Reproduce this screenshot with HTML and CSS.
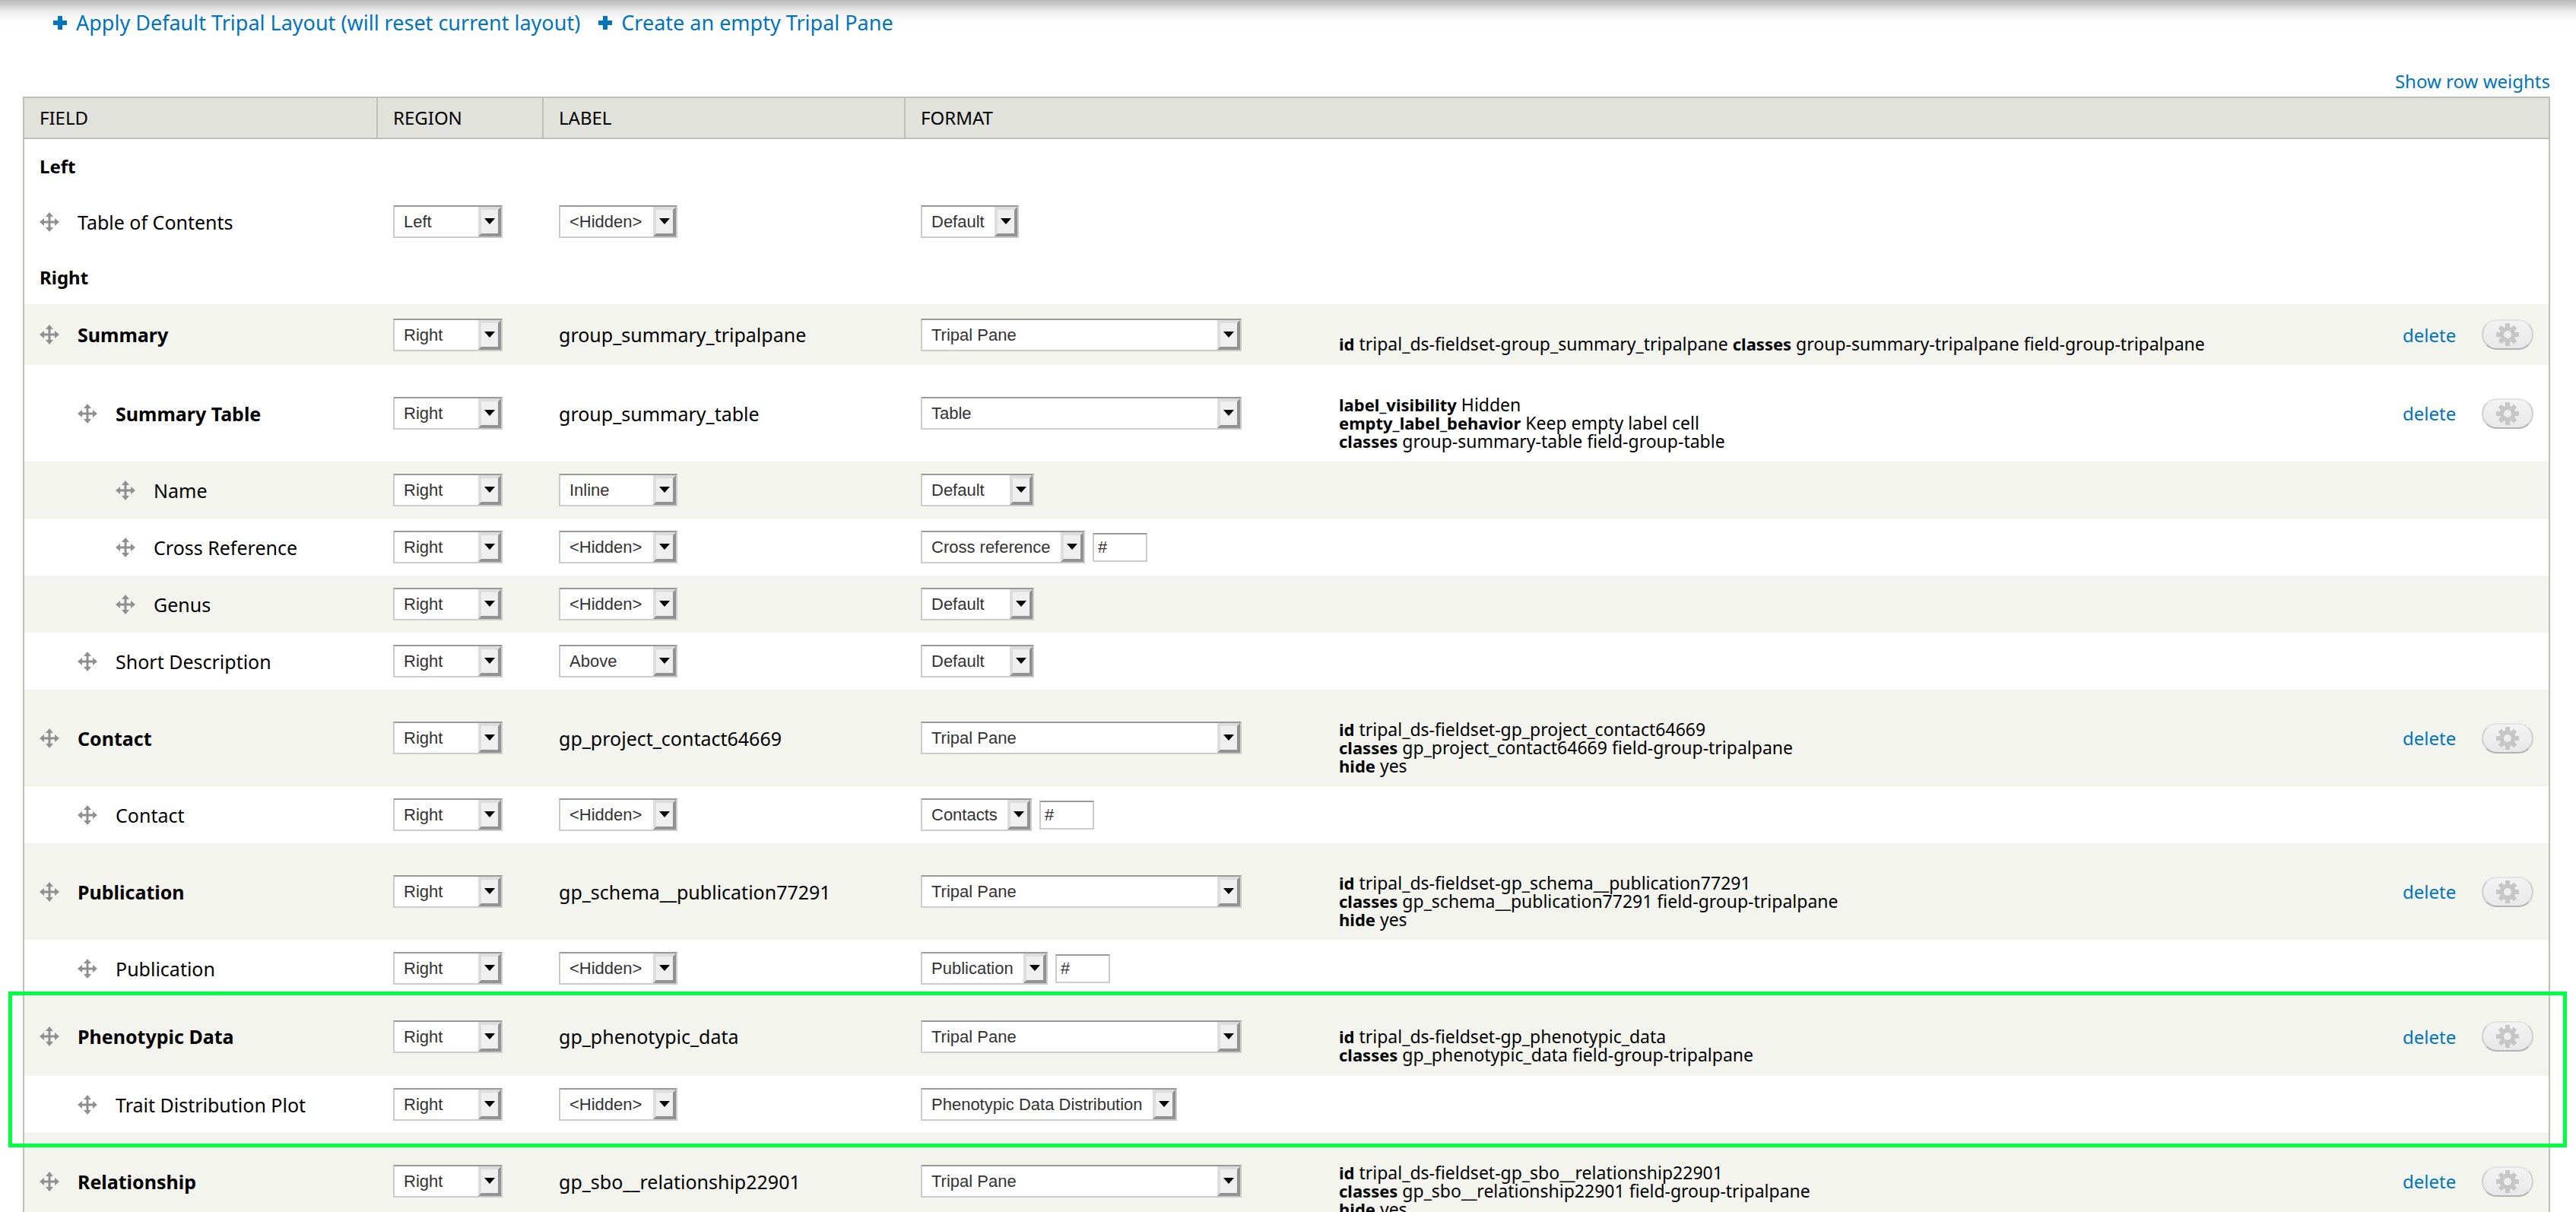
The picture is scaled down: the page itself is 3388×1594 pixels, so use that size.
FILE: index.html
```html
<!DOCTYPE html>
<html lang="en">
<head>
<meta charset="utf-8">
<title>Manage display</title>
<link rel="stylesheet" href="styles.css">
</head>
<body>
<svg class="sprite" aria-hidden="true">
  <symbol id="plus" viewBox="0 0 18 18"><path d="M6 0h6v6h6v6h-6v6H6v-6H0V6h6z"/></symbol>
  <symbol id="move" viewBox="0 0 26 26"><path d="M13 0l5 6h-3.500v5.500H20V8l6 5-6 5v-3.500h-5.500V20H18l-5 6-5-6h3.500v-5.500H6V18l-6-5 6-5v3.500h5.500V6H8z"/></symbol>
  <symbol id="gear" viewBox="-15 -15 30 30">
    <g id="teeth"><path d="M-3-15h6v30h-6zM-15-3h30v6h-30z"/><path transform="rotate(45)" d="M-3-14.500h6v29h-6zM-14.500-3h29v6h-29z"/><circle r="10.500"/></g>
    <circle class="gear-hole" r="5"/>
  </symbol>
</svg>
<main class="page">
  <nav class="actions" aria-label="Layout actions">
    <a href="#apply"><svg class="plus"><use href="#plus"/></svg>Apply Default Tripal Layout (will reset current layout)</a>
    <a href="#create"><svg class="plus"><use href="#plus"/></svg>Create an empty Tripal Pane</a>
  </nav>
  <div class="weights"><a href="#weights">Show row weights</a></div>
  <table class="fields">
    <colgroup><col class="c-field"><col class="c-region"><col class="c-label"><col class="c-format"><col><col class="c-delete"><col class="c-gear"></colgroup>
    <thead>
      <tr><th scope="col">FIELD</th><th scope="col">REGION</th><th scope="col">LABEL</th><th scope="col" colspan="4">FORMAT</th></tr>
    </thead>
    <tbody>
      <tr class="section"><td colspan="7">Left</td></tr>
      <tr>
        <td><div class="name"><svg class="move"><use href="#move"/></svg>Table of Contents</div></td>
        <td><select class="w-region" aria-label="Region for Table of Contents"><option>Left</option><option>Right</option></select></td>
        <td><select class="w-label" aria-label="Label for Table of Contents"><option>&lt;Hidden&gt;</option></select></td>
        <td colspan="4"><select aria-label="Format for Table of Contents"><option>Default</option></select></td>
      </tr>
      <tr class="section"><td colspan="7">Right</td></tr>
      <tr class="odd lines-1">
        <td><div class="name group"><svg class="move"><use href="#move"/></svg>Summary</div></td>
        <td><select class="w-region" aria-label="Region for Summary"><option>Right</option><option>Left</option></select></td>
        <td>group_summary_tripalpane</td>
        <td><select class="w-pane" aria-label="Format for Summary"><option>Tripal Pane</option></select></td>
        <td class="settings"><b>id</b> tripal_ds-fieldset-group_summary_tripalpane <b>classes</b> group-summary-tripalpane field-group-tripalpane</td>
        <td><a href="#delete">delete</a></td>
        <td><button class="gear" type="button" aria-label="Edit Summary"><svg><use href="#gear"/></svg></button></td>
      </tr>
      <tr class="lines-3">
        <td><div class="name group depth-1"><svg class="move"><use href="#move"/></svg>Summary Table</div></td>
        <td><select class="w-region" aria-label="Region for Summary Table"><option>Right</option><option>Left</option></select></td>
        <td>group_summary_table</td>
        <td><select class="w-pane" aria-label="Format for Summary Table"><option>Table</option></select></td>
        <td class="settings"><b>label_visibility</b> Hidden<br><b>empty_label_behavior</b> Keep empty label cell<br><b>classes</b> group-summary-table field-group-table</td>
        <td><a href="#delete">delete</a></td>
        <td><button class="gear" type="button" aria-label="Edit Summary Table"><svg><use href="#gear"/></svg></button></td>
      </tr>
      <tr class="odd">
        <td><div class="name depth-2"><svg class="move"><use href="#move"/></svg>Name</div></td>
        <td><select class="w-region" aria-label="Region for Name"><option>Right</option><option>Left</option></select></td>
        <td><select class="w-label" aria-label="Label for Name"><option>Inline</option></select></td>
        <td colspan="4"><select class="w-default" aria-label="Format for Name"><option>Default</option></select></td>
      </tr>
      <tr>
        <td><div class="name depth-2"><svg class="move"><use href="#move"/></svg>Cross Reference</div></td>
        <td><select class="w-region" aria-label="Region for Cross Reference"><option>Right</option><option>Left</option></select></td>
        <td><select class="w-label" aria-label="Label for Cross Reference"><option>&lt;Hidden&gt;</option></select></td>
        <td colspan="4"><div class="format"><select aria-label="Format for Cross Reference"><option>Cross reference</option></select><input type="text" value="#" aria-label="Link for Cross Reference"></div></td>
      </tr>
      <tr class="odd">
        <td><div class="name depth-2"><svg class="move"><use href="#move"/></svg>Genus</div></td>
        <td><select class="w-region" aria-label="Region for Genus"><option>Right</option><option>Left</option></select></td>
        <td><select class="w-label" aria-label="Label for Genus"><option>&lt;Hidden&gt;</option></select></td>
        <td colspan="4"><select class="w-default" aria-label="Format for Genus"><option>Default</option></select></td>
      </tr>
      <tr>
        <td><div class="name depth-1"><svg class="move"><use href="#move"/></svg>Short Description</div></td>
        <td><select class="w-region" aria-label="Region for Short Description"><option>Right</option><option>Left</option></select></td>
        <td><select class="w-label" aria-label="Label for Short Description"><option>Above</option></select></td>
        <td colspan="4"><select class="w-default" aria-label="Format for Short Description"><option>Default</option></select></td>
      </tr>
      <tr class="odd lines-3">
        <td><div class="name group"><svg class="move"><use href="#move"/></svg>Contact</div></td>
        <td><select class="w-region" aria-label="Region for Contact group"><option>Right</option><option>Left</option></select></td>
        <td>gp_project_contact64669</td>
        <td><select class="w-pane" aria-label="Format for Contact group"><option>Tripal Pane</option></select></td>
        <td class="settings"><b>id</b> tripal_ds-fieldset-gp_project_contact64669<br><b>classes</b> gp_project_contact64669 field-group-tripalpane<br><b>hide</b> yes</td>
        <td><a href="#delete">delete</a></td>
        <td><button class="gear" type="button" aria-label="Edit Contact"><svg><use href="#gear"/></svg></button></td>
      </tr>
      <tr>
        <td><div class="name depth-1"><svg class="move"><use href="#move"/></svg>Contact</div></td>
        <td><select class="w-region" aria-label="Region for Contact"><option>Right</option><option>Left</option></select></td>
        <td><select class="w-label" aria-label="Label for Contact"><option>&lt;Hidden&gt;</option></select></td>
        <td colspan="4"><div class="format"><select aria-label="Format for Contact"><option>Contacts</option></select><input type="text" value="#" aria-label="Link for Contact"></div></td>
      </tr>
      <tr class="odd lines-3">
        <td><div class="name group"><svg class="move"><use href="#move"/></svg>Publication</div></td>
        <td><select class="w-region" aria-label="Region for Publication group"><option>Right</option><option>Left</option></select></td>
        <td>gp_schema__publication77291</td>
        <td><select class="w-pane" aria-label="Format for Publication group"><option>Tripal Pane</option></select></td>
        <td class="settings"><b>id</b> tripal_ds-fieldset-gp_schema__publication77291<br><b>classes</b> gp_schema__publication77291 field-group-tripalpane<br><b>hide</b> yes</td>
        <td><a href="#delete">delete</a></td>
        <td><button class="gear" type="button" aria-label="Edit Publication"><svg><use href="#gear"/></svg></button></td>
      </tr>
      <tr>
        <td><div class="name depth-1"><svg class="move"><use href="#move"/></svg>Publication</div></td>
        <td><select class="w-region" aria-label="Region for Publication"><option>Right</option><option>Left</option></select></td>
        <td><select class="w-label" aria-label="Label for Publication"><option>&lt;Hidden&gt;</option></select></td>
        <td colspan="4"><div class="format"><select aria-label="Format for Publication"><option>Publication</option></select><input type="text" value="#" aria-label="Link for Publication"></div></td>
      </tr>
    </tbody>
    <tbody class="highlighted">
      <tr class="odd lines-2">
        <td><div class="name group"><svg class="move"><use href="#move"/></svg>Phenotypic Data</div></td>
        <td><select class="w-region" aria-label="Region for Phenotypic Data"><option>Right</option><option>Left</option></select></td>
        <td>gp_phenotypic_data</td>
        <td><select class="w-pane" aria-label="Format for Phenotypic Data"><option>Tripal Pane</option></select></td>
        <td class="settings"><b>id</b> tripal_ds-fieldset-gp_phenotypic_data<br><b>classes</b> gp_phenotypic_data field-group-tripalpane</td>
        <td><a href="#delete">delete</a></td>
        <td><button class="gear" type="button" aria-label="Edit Phenotypic Data"><svg><use href="#gear"/></svg></button></td>
      </tr>
      <tr>
        <td><div class="name depth-1"><svg class="move"><use href="#move"/></svg>Trait Distribution Plot</div></td>
        <td><select class="w-region" aria-label="Region for Trait Distribution Plot"><option>Right</option><option>Left</option></select></td>
        <td><select class="w-label" aria-label="Label for Trait Distribution Plot"><option>&lt;Hidden&gt;</option></select></td>
        <td colspan="4"><select aria-label="Format for Trait Distribution Plot"><option>Phenotypic Data Distribution</option></select></td>
      </tr>
    </tbody>
    <tbody>
      <tr class="odd lines-3">
        <td><div class="name group"><svg class="move"><use href="#move"/></svg>Relationship</div></td>
        <td><select class="w-region" aria-label="Region for Relationship"><option>Right</option><option>Left</option></select></td>
        <td>gp_sbo__relationship22901</td>
        <td><select class="w-pane" aria-label="Format for Relationship"><option>Tripal Pane</option></select></td>
        <td class="settings"><b>id</b> tripal_ds-fieldset-gp_sbo__relationship22901<br><b>classes</b> gp_sbo__relationship22901 field-group-tripalpane<br><b>hide</b> yes</td>
        <td><a href="#delete">delete</a></td>
        <td><button class="gear" type="button" aria-label="Edit Relationship"><svg><use href="#gear"/></svg></button></td>
      </tr>
    </tbody>
  </table>
</main>
</body>
</html>
```
FILE: styles.css
```css
* { box-sizing: border-box; }

body {
  margin: 0;
  background: #fff;
  color: #000;
  font-family: "Lucida Grande", "Noto Sans", sans-serif;
  font-size: 25px;
  line-height: 32px;
}

a { color: #0074bd; text-decoration: none; }
.sprite { position: absolute; width: 0; height: 0; }

.page {
  height: 100vh;
  overflow-y: auto;
  scrollbar-width: none;
  padding: 10px 34px 0 30px;
  background: linear-gradient(#b8b8b8 0, #cfcfcf 7px, #ececec 15px, #f9f9f9 24px, #fff 36px);
}

.actions {
  display: flex;
  gap: 24px;
  padding: 0 40px 37px;
  font-size: 27px;
  line-height: 40px;
}
.actions a { display: flex; align-items: center; gap: 12px; }
.plus { width: 18px; height: 18px; fill: #0074bd; }

.weights { text-align: right; font-size: 24px; line-height: 40px; }

.fields {
  width: 100%;
  table-layout: fixed;
  border: 2px solid #bebfb9;
  border-spacing: 0;
}
.c-field { width: 465px; }
.c-region { width: 218px; }
.c-label { width: 476px; }
.c-format { width: 550px; }
.c-delete { width: 104px; }
.c-gear { width: 108px; }

th {
  height: 54px;
  padding: 0 20px;
  background: #e1e2dc;
  border-right: 2px solid #bebfb9;
  border-bottom: 2px solid #bebfb9;
  font-size: 24px;
  font-weight: 400;
  text-align: left;
}
th:last-child { border-right: 0; }

td { height: 75px; padding: 0 0 0 20px; vertical-align: middle; }
.odd td { background: #f3f4ee; }
.section td { height: 71px; font-size: 24px; font-weight: 700; }
.lines-1 td { height: 80px; }
.lines-2 td { height: 104px; }
.lines-3 td { height: 127px; }
td a { font-size: 24px; }

.name { display: flex; align-items: center; gap: 24px; }
.name.group { font-weight: 700; }
.depth-1 { padding-left: 50px; }
.depth-2 { padding-left: 100px; }
.move { width: 26px; height: 26px; fill: #909090; }

/* group settings start one blank line down */
td.settings { padding-top: 24px; font-size: 23px; line-height: 24px; }
.settings b { font-size: 22px; }

select, input {
  display: block;
  margin: 0;
  border: 2px solid #ccc;
  border-top-color: #999;
  border-radius: 0;
  color: #333;
  font-family: "Liberation Sans", Arial, sans-serif;
  font-size: 22px;
}
select {
  appearance: none;
  height: 43px;
  padding: 0 43px 0 12px;
  background: #fff url("data:image/svg+xml,%3Csvg xmlns='http://www.w3.org/2000/svg' width='30' height='39'%3E%3Cpath fill='%23ddd' d='M0 0h30v39H0z'/%3E%3Cpath fill='%23929292' d='M30 0v39H0l4-4h22V4z'/%3E%3Cpath fill='%23efefef' d='M4 4h22v31H4z'/%3E%3Cpath d='M8 15h14l-7 8z'/%3E%3C/svg%3E") right center / 30px 39px no-repeat;
}
input { width: 72px; height: 38px; padding: 0 5px; background: #fff; }
.format { display: flex; align-items: center; gap: 10px; }
.w-region { width: 144px; }
.w-label { width: 156px; }
.w-default { width: 149px; }
.w-pane { width: 422px; }

.gear {
  display: flex;
  align-items: center;
  justify-content: center;
  width: 68px;
  height: 40px;
  padding: 0;
  border: 2px solid #cfcfcf;
  border-top-color: #e2e2e2;
  border-bottom-color: #b3b3b3;
  border-radius: 20px;
  background: linear-gradient(#f3f3f3, #e8e8e8);
}
.gear svg { width: 30px; height: 30px; fill: #c6c6c6; }
.gear-hole { fill: #eee; }

/* marker drawn round the highlighted rows */
.highlighted { position: relative; }
.highlighted::after {
  content: "";
  position: absolute;
  inset: -7px -24px -19px -21px;
  border: 5px solid #00ff40;
  pointer-events: none;
}
```
